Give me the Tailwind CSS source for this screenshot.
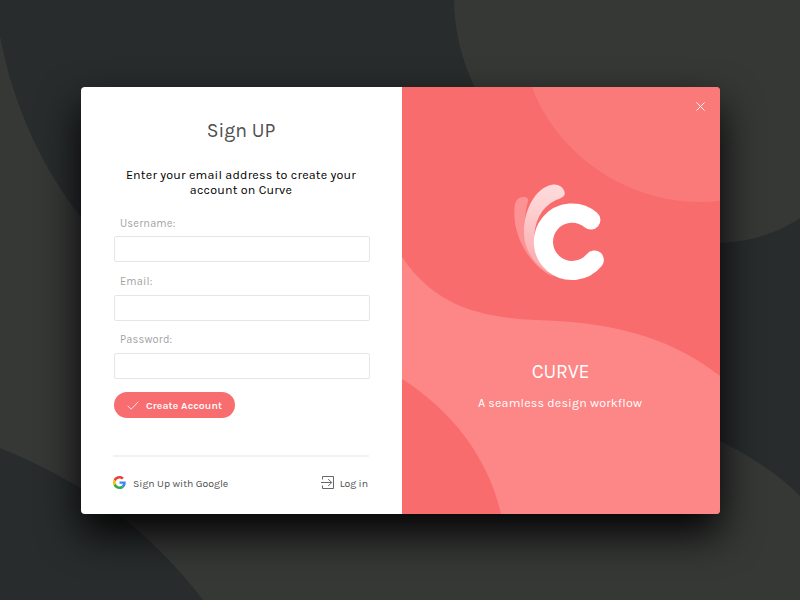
<!DOCTYPE html>
<html lang="en">
<head>
<meta charset="utf-8">
<title>Curve – Sign up</title>
<script src="https://cdn.jsdelivr.net/npm/@tailwindcss/browser@4"></script>
</head>
<body class="relative h-[600px] w-[800px] overflow-hidden bg-[#282c2d] pl-[81px] pt-[87px] font-[Karla,Inter,'Liberation_Sans',sans-serif]">
  <svg class="absolute inset-0" width="800" height="600" viewBox="0 0 800 600" fill="#363836">
    <path d="M454 0C454 32 463 63 475 88C520 183 615 243 722 243C752 241 778 233 800 218V0Z"/>
    <path d="M0 36C13 105 42 168 81 217C230 430 480 290 720 441C752 457 778 474 800 496V600H203C148 528 80 480 0 448Z"/>
  </svg>
  <main class="relative flex h-[427px] w-[639px] overflow-hidden rounded-[4px] shadow-[0_19px_40px_0_rgba(0,0,0,0.97)]">
    <section class="flex w-[321px] flex-col bg-white pl-[33px] pr-8 pt-[31px]">
      <h1 class="h-[26px] pr-0.5 text-center text-[19.5px] leading-[26px] tracking-[0px] text-[#4f4f4f]">Sign UP</h1>
      <p class="mt-6 whitespace-nowrap pr-0.5 text-center text-[12.5px] leading-[15px] tracking-[0.2px] text-black">Enter your email address to create your<br>account on Curve</p>
      <form class="mt-[18.5px] flex flex-col">
        <label class="h-[58px] text-[11px] leading-[14px] tracking-[0.18px] text-[#a3a3a3]"><span class="block pl-1.5">Username:</span><input class="mt-[5px] block h-[26px] w-full rounded-[2px] border border-[#e6e6e6] bg-white"></label>
        <label class="h-[58px] text-[11px] leading-[14px] tracking-[0.18px] text-[#a3a3a3]"><span class="block pl-1.5">Email:</span><input class="mt-[6px] block h-[26px] w-full rounded-[2px] border border-[#e6e6e6] bg-white"></label>
        <label class="h-[58px] text-[11px] leading-[14px] tracking-[0.18px] text-[#a3a3a3]"><span class="block pl-1.5">Password:</span><input type="password" class="mt-[6px] block h-[26px] w-full rounded-[2px] border border-[#e6e6e6] bg-white"></label>
        <button type="button" class="mt-[1px] flex h-[26px] w-[121px] items-center gap-[7px] rounded-full bg-[#f86d70] pl-[13px] pt-px text-[10.5px] font-semibold tracking-[0.1px] whitespace-nowrap text-white">
          <svg class="shrink-0" width="12" height="9" viewBox="0 0 12 9" fill="none" stroke="#fff" stroke-width=".8"><path d="M.7 4.8 4.2 8.2 11.2.8"/></svg>
          <span class="pt-px">Create Account</span>
        </button>
      </form>
      <footer class="relative -left-px mt-[37.500px] flex h-[54px] items-center justify-between border-t-2 border-[#f2f2f2] text-[10.5px] tracking-[-0.03px] text-[#505050]">
        <a class="flex items-center gap-[7px]">
          <svg class="relative -top-px" width="13" height="13" viewBox="0 0 48 48"><path fill="#ea4335" d="M24 9.5c3.5 0 6.700 1.200 9.200 3.600l6.900-6.900C35.900 2.400 30.500 0 24 0 14.600 0 6.500 5.400 2.600 13.200l8 6.200C12.500 13.700 17.700 9.500 24 9.500z"/><path fill="#4285f4" d="M47 24.600c0-1.600-.2-3.100-.4-4.600H24v9h12.900c-.6 3-2.200 5.500-4.700 7.200l7.700 6C44.400 38 47 31.800 47 24.600z"/><path fill="#fbbc05" d="M10.500 28.600A14.500 14.500 0 0 1 10.500 19.400l-8-6.200a24 24 0 0 0 0 21.600z"/><path fill="#34a853" d="M24 48c6.500 0 11.900-2.100 15.900-5.800l-7.700-6A14.500 14.500 0 0 1 10.500 28.600l-8 6.200C6.500 42.600 14.600 48 24 48z"/></svg>
          <span class="pt-0.5">Sign Up with Google</span>
        </a>
        <a class="flex items-center gap-[5px] pr-px">
          <svg class="relative -top-px" width="14" height="13" viewBox="0 0 14 13" fill="none" stroke="#666" stroke-width="1"><path d="M1.500 3.500V.5H12.500V12.500H1.500V9.500"/><path d="M0 6.500H10.500M7.200 3 10.700 6.500 7.200 10"/></svg>
          <span class="pt-0.5">Log in</span>
        </a>
      </footer>
    </section>
    <section class="relative flex w-[318px] flex-col items-center bg-[#f86c6e] text-white">
      <svg class="absolute inset-0" width="318" height="427" viewBox="402 87 318 427">
        <path fill="#f97a78" d="M532 87C556 153 625 202 699 202C706 202 714 201.500 720 200.500V87Z"/>
        <path fill="#fd8686" d="M402 257C436 307 480 317 536 320C604 322 665 333 720 376V514H501C489 460 453 411 402 379Z"/>
      </svg>
      <button type="button" aria-label="Close" class="absolute right-[15px] top-[15px]"><svg width="9" height="9" viewBox="0 0 9 9" stroke="#fff" stroke-width=".9"><path d="M.4.4 8.600 8.600M8.600.4.4 8.600"/></svg></button>
      <svg class="relative mt-[93px] h-[105px] w-[120px]" viewBox="501 180 120 105">
        <defs><linearGradient id="feather" x1="560" y1="185" x2="545" y2="270" gradientUnits="userSpaceOnUse"><stop stop-color="#ffdbdc"/><stop offset=".3" stop-color="#fed1d2"/><stop offset="1" stop-color="#fbaaac"/></linearGradient></defs>
        <path fill="#fc9294" d="M514.500 208C514.500 200 519 197 524 197C528 197 529 200 527.500 203C525 213 524 225 525 235C529 255 538 265 554 277C534 269 512 240 514.500 208Z"/>
        <path fill="url(#feather)" d="M524 235C523 211 535 188 552 184.800C559 183.500 564 188 564.800 193C565 197 560 198.500 556 200C541 207 534 222 534 241C536 258 546 270 560 278C541 272 525 255 524 235Z"/>
        <path d="M590.800 220A28.700 28.700 0 1 0 594.300 260" fill="none" stroke="#fff" stroke-width="19.200" stroke-linecap="round"/>
      </svg>
      <h2 class="relative mt-[74px] pr-px text-[19.500px] leading-[26px] tracking-[-0.2px]">CURVE</h2>
      <p class="relative mt-[9px] pr-0.5 text-[12.500px] leading-[18px] tracking-[0.15px]">A seamless design workflow</p>
    </section>
  </main>
</body>
</html>
